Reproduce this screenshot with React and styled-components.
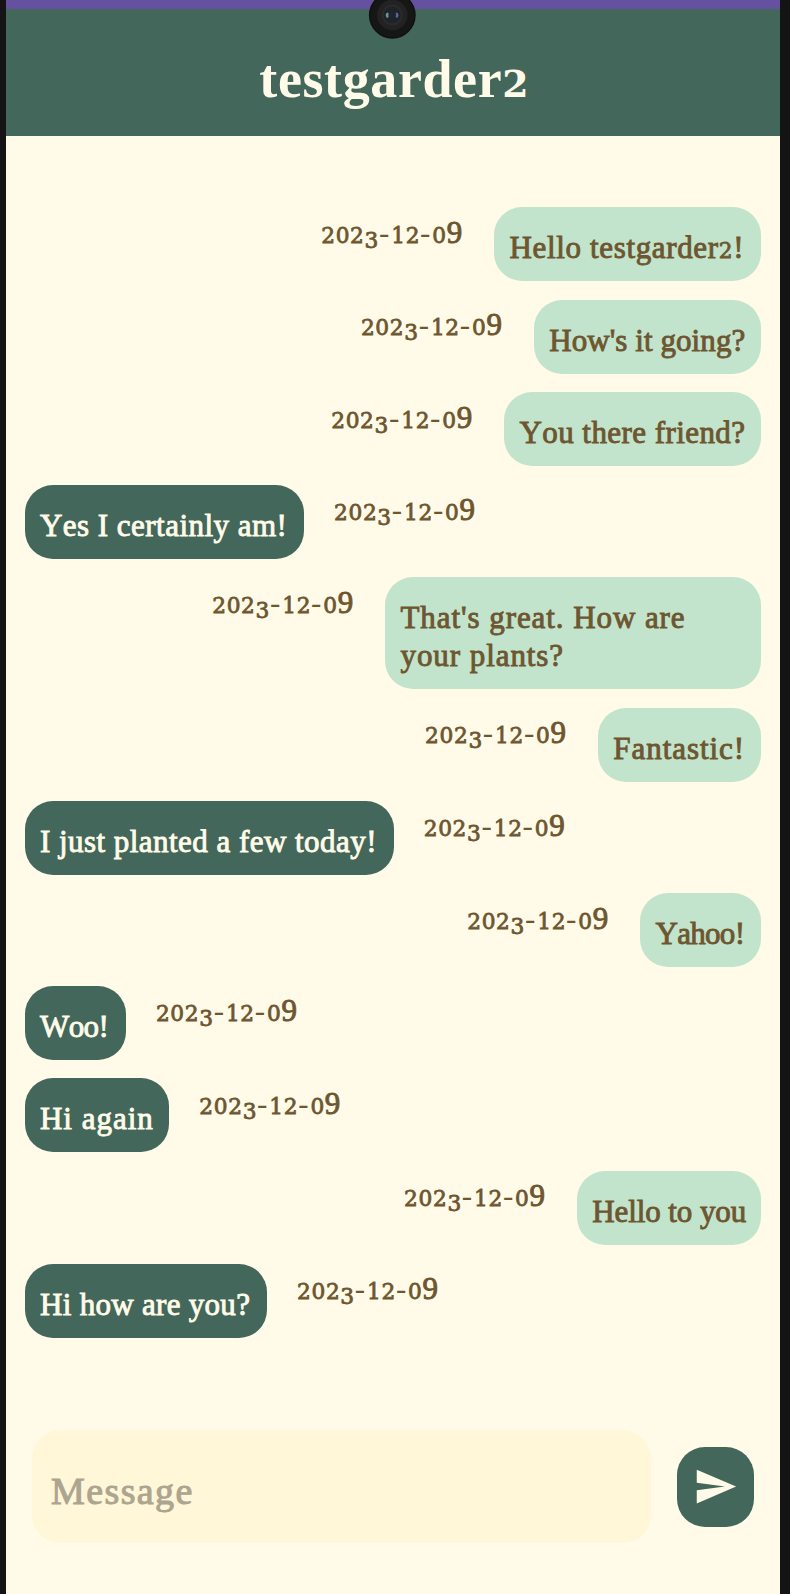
import React from "react";
import styled, { createGlobalStyle } from "styled-components";
import { MdSend } from "react-icons/md";

const colors = {
  cream: "#fffbe8",
  field: "#fff7d7",
  forest: "#43675a",
  mint: "#c2e4cc",
  bark: "#6d5630",
  placeholder: "#aca58f",
  status: "#6650a0",
  bezel: "#141414",
};

const GlobalStyle = createGlobalStyle`
  * { box-sizing: border-box; }
  body {
    margin: 0;
    background: ${colors.bezel};
    font-family: "Liberation Serif", serif;
    font-kerning: none;
  }
`;

const Phone = styled.div`
  position: relative;
  height: 1594px;
  padding: 0 10px 0 6px;
  background: ${colors.bezel};
  overflow: hidden;
`;

const Screen = styled.main`
  display: flex;
  flex-direction: column;
  height: 100%;
  background: ${colors.cream};
`;

const StatusBar = styled.div`
  flex: none;
  height: 9px;
  background: ${colors.status};
`;

const Camera = styled.svg`
  position: absolute;
  left: 368px;
  top: -9px;
  width: 48px;
  height: 48px;
`;

const Header = styled.header`
  flex: none;
  height: 127px;
  padding: 38px 0 0 3px;
  background: ${colors.forest};
  text-align: center;
`;

const Title = styled.h1`
  margin: 0;
  color: ${colors.cream};
  font-size: 54px;
  font-weight: 700;
  line-height: 64px;
  letter-spacing: 0.6px;
`;

const Messages = styled.section`
  display: flex;
  flex-direction: column;
  gap: 18.5px;
  flex: none;
  height: 1294px;
  padding: 71px 18.8px 0 18.7px;
`;

const Row = styled.div`
  display: flex;
  flex-direction: ${({ $sent }) => ($sent ? "row-reverse" : "row")};
  align-items: flex-start;
  gap: 30px;
`;

const Bubble = styled.div`
  flex: none;
  width: ${({ $width }) => $width}px;
  padding: 22px 0 14.1px 15.3px;
  border-radius: 28px;
  background: ${({ $sent }) => ($sent ? colors.mint : colors.forest)};
  color: ${({ $sent }) => ($sent ? colors.bark : colors.cream)};
  font-size: 31px;
  line-height: 38px;
  letter-spacing: ${({ $tracking }) => $tracking}px;
  white-space: pre-line;
  -webkit-text-stroke: 0.9px currentColor;
`;

const DateLabel = styled.time`
  flex: none;
  width: 143px;
  padding-top: 6.5px;
  color: ${colors.bark};
  font-size: 31px;
  line-height: 38px;
  white-space: nowrap;
  -webkit-text-stroke: 0.9px currentColor;
`;

const Figure = styled.span`
  font-family: "DejaVu Serif", serif;
  font-size: 0.7em;
  line-height: 1px;
  letter-spacing: 0.03em;
  vertical-align: ${({ $drop }) => ($drop ? "-0.22em" : "baseline")};
  -webkit-text-stroke: 0.8px currentColor;

  ${Title} & {
    -webkit-text-stroke: 0;
  }
`;

const Hyphen = styled.span`
  letter-spacing: 0.06em;
  -webkit-text-stroke: 0;
`;

const Composer = styled.form`
  display: flex;
  align-items: center;
  gap: 26px;
  padding-left: 26px;
`;

const Input = styled.input`
  width: 619px;
  height: 113px;
  padding: 9px 19px 0;
  border: 0;
  border-radius: 28px;
  outline: 0;
  background: ${colors.field};
  color: ${colors.bark};
  font: 38px "Liberation Serif", serif;
  letter-spacing: 1.4px;
  -webkit-text-stroke: 1px currentColor;
  &::placeholder {
    color: ${colors.placeholder};
    opacity: 1;
  }
`;

const SendButton = styled.button`
  display: flex;
  align-items: center;
  justify-content: center;
  width: 77px;
  height: 80px;
  padding: 0;
  border: 0;
  border-radius: 28px;
  background: ${colors.forest};
  color: ${colors.cream};
`;

const messages = [
  { text: "Hello testgarder2!", sent: true, width: 267, tracking: 0.65 },
  { text: "How's it going?", sent: true, width: 227.3, tracking: 0.07 },
  { text: "You there friend?", sent: true, width: 257, tracking: 0.43 },
  { text: "Yes I certainly am!", width: 279.3, tracking: 0.47 },
  { text: "That's great. How are\nyour plants?", sent: true, width: 376, tracking: 0.93 },
  { text: "Fantastic!", sent: true, width: 163.2, tracking: 0.95 },
  { text: "I just planted a few today!", width: 369, tracking: 0.46 },
  { text: "Yahoo!", sent: true, width: 121, tracking: -0.7 },
  { text: "Woo!", width: 101.2, tracking: -0.6 },
  { text: "Hi again", width: 144.6, tracking: 1 },
  { text: "Hello to you", sent: true, width: 184.2, tracking: -0.1 },
  { text: "Hi how are you?", width: 242.3, tracking: 0.3 },
];

// Old-style numerals: 0-2 sit at x-height, 3 hangs below the baseline.
function OldStyle({ children }) {
  return children.split(/([0-2]+|3|-)/).filter(Boolean).map((part, i) => {
    if (/^[0-3]/.test(part)) return <Figure key={i} $drop={part === "3"}>{part}</Figure>;
    if (part === "-") return <Hyphen key={i}>-</Hyphen>;
    return part;
  });
}

function Message({ text, sent, width, tracking }) {
  return (
    <Row $sent={sent}>
      <Bubble $sent={sent} $width={width} $tracking={tracking}>
        <OldStyle>{text}</OldStyle>
      </Bubble>
      <DateLabel><OldStyle>2023-12-09</OldStyle></DateLabel>
    </Row>
  );
}

export default function App() {
  return (
    <>
      <GlobalStyle />
      <Phone>
        <Screen>
          <StatusBar />
          <Header><Title><OldStyle>testgarder2</OldStyle></Title></Header>
          <Messages>
            {messages.map((m) => <Message key={m.text} {...m} />)}
          </Messages>
          <Composer>
            <Input placeholder="Message" />
            <SendButton type="button" aria-label="Send"><MdSend size={45} /></SendButton>
          </Composer>
        </Screen>
        <Camera viewBox="0 0 48 48">
          <circle cx="24.3" cy="24.3" r="23.4" fill="#101010" />
          <circle cx="24.3" cy="24.3" r="22" fill="#161616" />
          <circle cx="24.3" cy="24" r="15.3" fill="#222" />
          <circle cx="24.3" cy="24" r="10.5" fill="#2b2b2c" />
          <circle cx="24.3" cy="24" r="8.5" fill="#202229" />
          <ellipse cx="19.4" cy="24.3" rx="1.6" ry="2.8" fill="#5f9a9b" />
          <ellipse cx="28.8" cy="24.3" rx="1.6" ry="2.8" fill="#5967a5" />
          <circle cx="24.2" cy="24.3" r="3.7" fill="#20242f" />
        </Camera>
      </Phone>
    </>
  );
}
